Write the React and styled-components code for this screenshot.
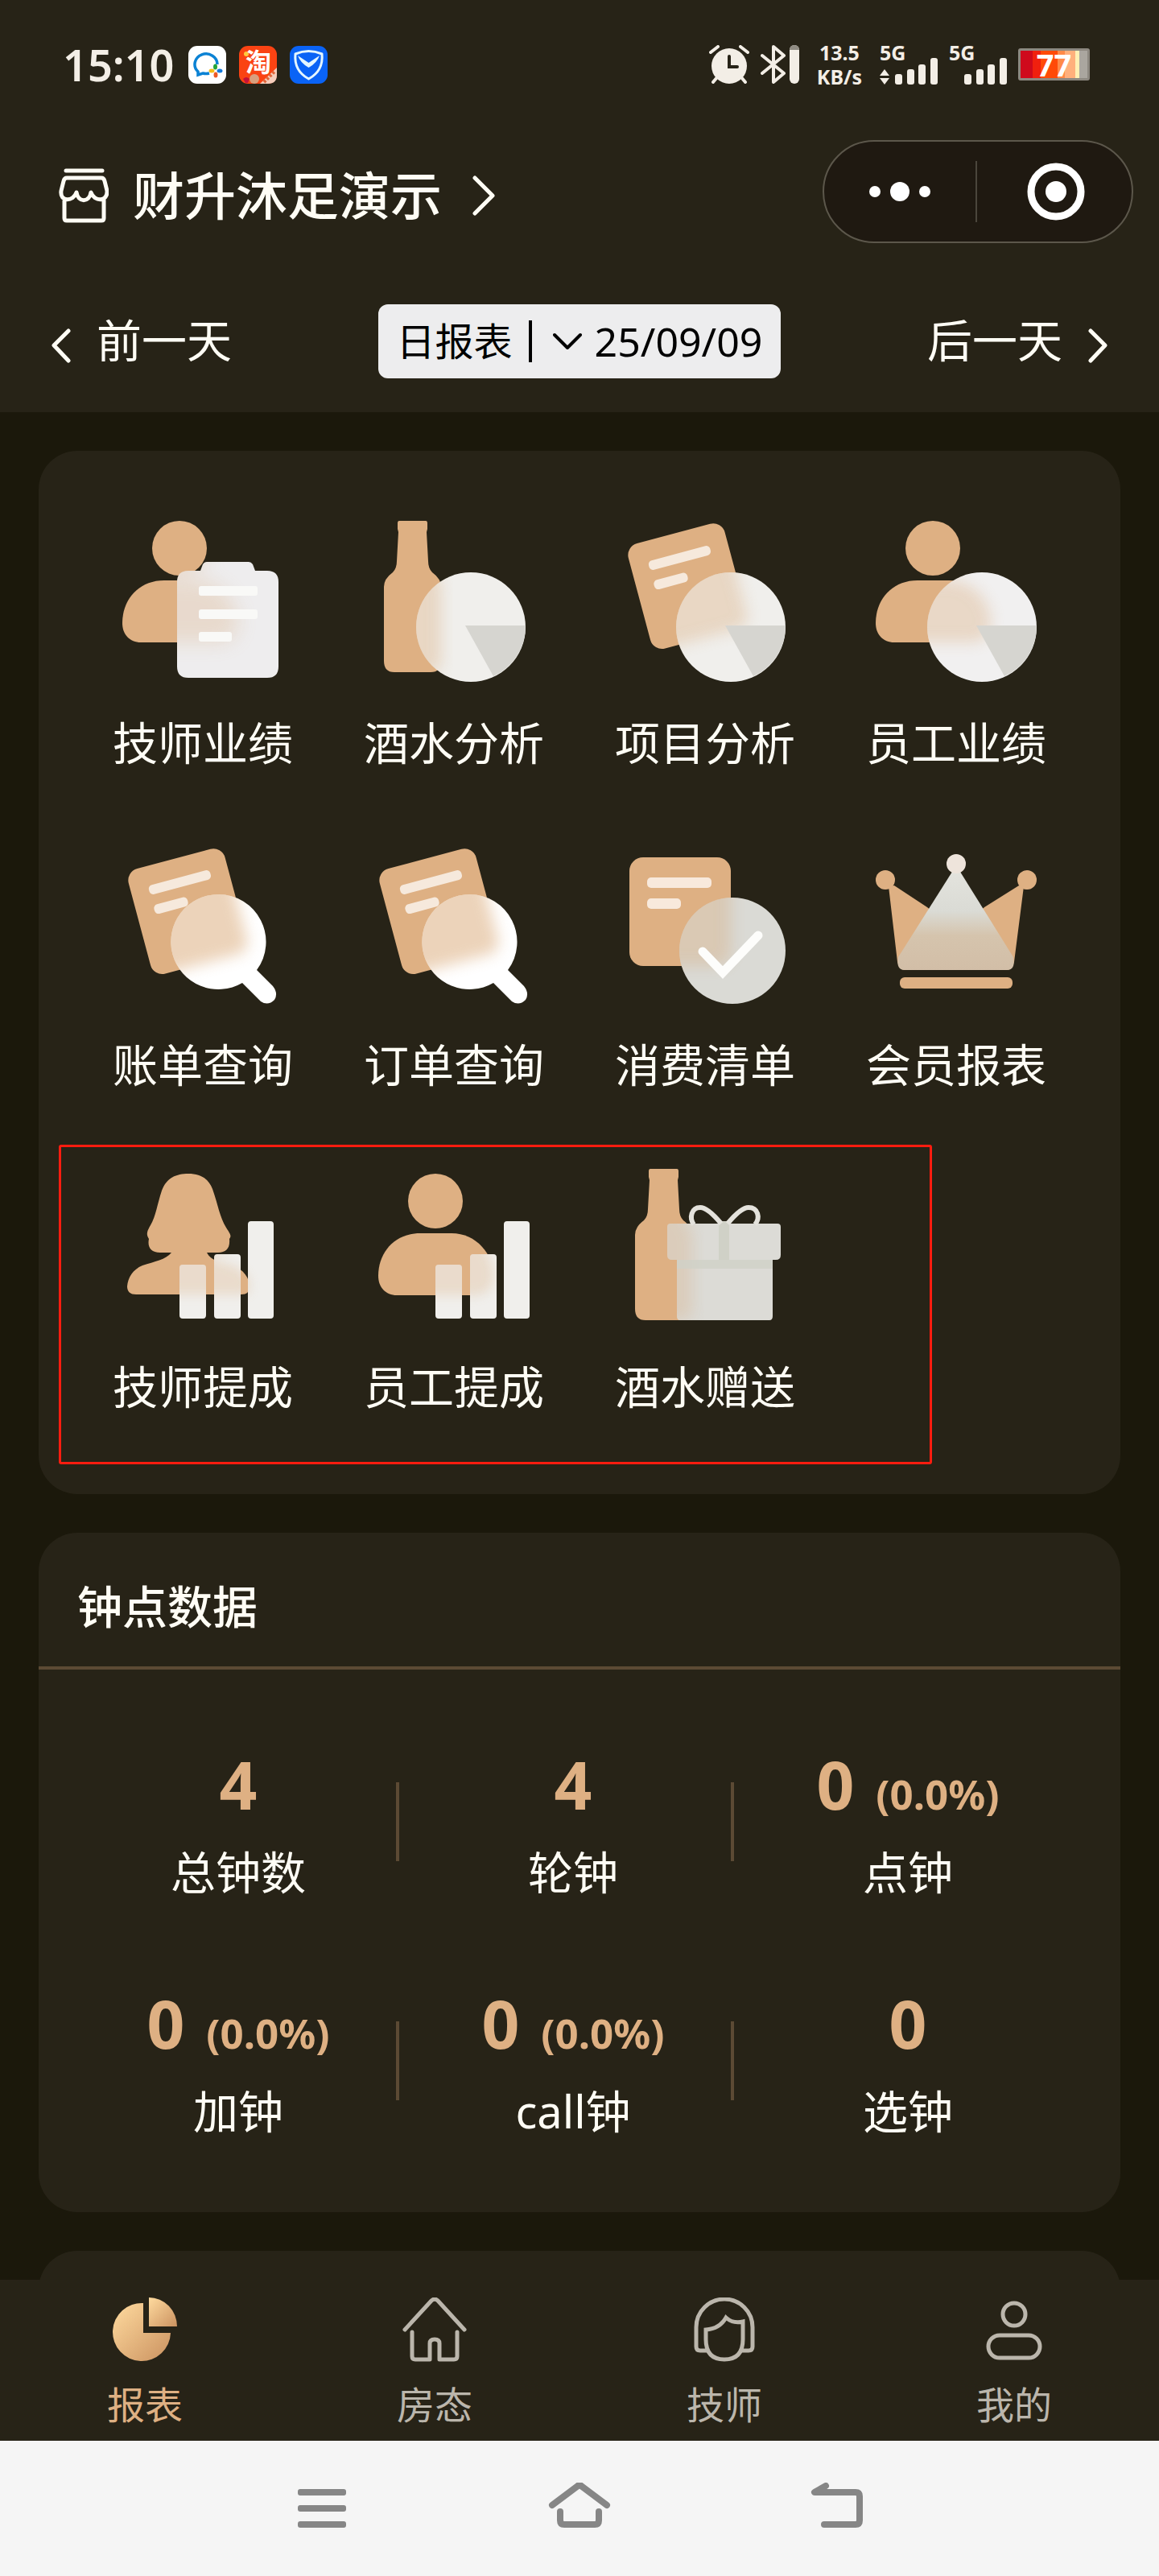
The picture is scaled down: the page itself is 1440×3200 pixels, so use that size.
import React, { useId } from "react";
import styled, { createGlobalStyle } from "styled-components";

const color = {
  page: "#1b180b",
  panel: "#272317",
  tan: "#deb083",
  line: "#5c4a34",
  text: "#fffdf5",
  muted: "#bbb6ac",
};

const GlobalStyle = createGlobalStyle`
  * { box-sizing: border-box; }
  body {
    margin: 0;
    background: ${color.page};
    color: ${color.text};
    font-family: "Noto Sans", "Noto Sans CJK SC", sans-serif;
  }
  button {
    margin: 0;
    padding: 0;
    border: 0;
    background: none;
    color: inherit;
    font: inherit;
    cursor: pointer;
  }
  a { color: inherit; text-decoration: none; }
  svg { display: block; flex: none; }
`;

/* ---------- layout ---------- */

const Screen = styled.div`
  display: flex;
  flex-direction: column;
  height: 100vh;
`;

const Header = styled.header`
  flex: none;
  padding-bottom: 42px;
  background: ${color.panel};
`;

const StatusBar = styled.div`
  display: flex;
  align-items: center;
  justify-content: space-between;
  height: 160px;
  padding: 0 86px 0 78px;
  color: #f3eee6;
`;

const StatusGroup = styled.div`
  display: flex;
  align-items: center;
  gap: ${(p) => p.$gap}px;
`;

const Time = styled.span`
  margin-right: 2px;
  font-size: 54px;
  font-weight: 600;
  line-height: 64px;
`;

const Speed = styled.div`
  display: flex;
  flex-direction: column;
  align-items: center;
  padding: 0 8px;
  font-size: 25px;
  font-weight: 700;
  line-height: 30px;
`;

const Signal = styled.div`
  display: grid;
  width: 72px;
  height: 50px;
  font-size: 25px;
  font-weight: 700;
  line-height: 20px;
  > * { grid-area: 1 / 1; }
`;

const Battery = styled.div`
  display: flex;
  align-items: center;
  justify-content: center;
  width: 89px;
  height: 40px;
  border: 3px solid #8d8880;
  border-radius: 3px;
  background: linear-gradient(
    90deg,
    #cf0a1c 0 18%,
    #f0200e 18% 30%,
    #ff4a08 30% 55%,
    #ff8a48 55% 66%,
    #ffb07c 66% 82%,
    #fff0b4 82% 88%,
    #aaa69f 88%
  );
  color: #fff;
  font-size: 38px;
  font-weight: 700;
  line-height: 36px;
`;

const TitleRow = styled.div`
  display: flex;
  align-items: center;
  justify-content: space-between;
  height: 128px;
  margin-top: 14px;
  padding: 0 32px 0 73px;
`;

const ShopButton = styled.button`
  display: flex;
  align-items: center;
  padding-top: 10px;
`;

const ShopName = styled.span`
  margin: 0 38px 0 30px;
  font-size: 64px;
  font-weight: 500;
  line-height: 80px;
`;

const Capsule = styled.div`
  display: flex;
  align-items: center;
  width: 386px;
  height: 128px;
  border: 2px solid #5c574b;
  border-radius: 64px;
  background: #1f1911;
`;

const CapsuleButton = styled.button`
  display: flex;
  flex: 1;
  align-items: center;
  justify-content: center;
  height: 76px;
  & + & {
    padding-left: 4px;
    border-left: 2px solid #4b463c;
  }
`;

const DateRow = styled.div`
  display: flex;
  align-items: center;
  justify-content: space-between;
  margin-top: 76px;
  padding: 0 64px;
`;

const DayButton = styled.button`
  display: flex;
  align-items: center;
  gap: 32px;
  padding-bottom: 4px;
  font-size: 56px;
  line-height: 80px;
`;

const DatePicker = styled.button`
  display: flex;
  align-items: center;
  justify-content: center;
  gap: 16px;
  min-width: 500px;
  height: 92px;
  border-radius: 12px;
  background: #ededee;
  color: #000;
  font-size: 48px;
  line-height: 64px;
`;

const PickerRule = styled.span`
  width: 4px;
  height: 52px;
  margin: 0 10px 0 4px;
  background: #000;
`;

const PickerDate = styled.span`
  font-size: 50px;
`;

const Main = styled.main`
  display: flex;
  flex: 1;
  flex-direction: column;
  gap: 48px;
  min-height: 0;
  padding: 48px 48px 0;
  overflow-y: auto;
  scrollbar-width: none;
`;

const Card = styled.section`
  position: relative;
  flex: none;
  min-height: 240px;
  border-radius: 48px;
  background: ${color.panel};
`;

const MenuGrid = styled.nav`
  display: grid;
  grid-template-columns: repeat(4, 1fr);
  padding: 48px;
`;

const MenuItem = styled.a`
  display: flex;
  flex-direction: column;
  align-items: center;
  gap: 36px;
  padding: 39px 0 47px;
  font-size: 56px;
  line-height: 78px;
  white-space: nowrap;
`;

const MenuIcon = styled.svg`
  width: 200px;
  height: 200px;
`;

const Highlight = styled.div`
  position: absolute;
  top: 862px;
  right: 234px;
  bottom: 37px;
  left: 25px;
  border: 3px solid #ff1c0f;
  border-radius: 3px;
  pointer-events: none;
`;

const CardTitle = styled.h2`
  margin: 0;
  padding: 52px 48px 36px;
  border-bottom: 4px solid ${color.line};
  font-size: 56px;
  font-weight: 500;
  line-height: 78px;
`;

const StatGrid = styled.div`
  display: grid;
  grid-template-columns: repeat(3, 1fr);
  column-gap: 16px;
  padding: 40px 64px 40px 48px;
`;

const Stat = styled.div`
  display: flex;
  flex-direction: column;
  align-items: center;
  gap: 14px;
  padding: 46px 0 47px;
  background: linear-gradient(${color.line}, ${color.line}) no-repeat right center / 4px 98px;
  &:nth-child(3n) { background: none; }
`;

const StatValue = styled.div`
  display: flex;
  align-items: baseline;
  gap: 27px;
  height: 112px;
  color: ${color.tan};
  font-size: 82px;
  font-weight: 700;
  line-height: 112px;
`;

const StatShare = styled.span`
  font-size: 51px;
  line-height: 64px;
`;

const StatLabel = styled.div`
  font-size: 56px;
  line-height: 78px;
`;

const TabBar = styled.nav`
  display: grid;
  flex: none;
  grid-template-columns: repeat(4, 1fr);
  background: ${color.panel};
`;

const Tab = styled.a`
  display: flex;
  flex-direction: column;
  align-items: center;
  gap: 20px;
  padding: 22px 0 12px;
  color: ${(p) => (p.$active ? color.tan : color.muted)};
  font-size: 47px;
  line-height: 66px;
`;

const SystemNav = styled.nav`
  display: flex;
  flex: none;
  align-items: center;
  justify-content: center;
  gap: 240px;
  height: 168px;
  background: #f5f5f5;
  color: #868686;
`;

/* ---------- menu drawings ---------- */

const Person = () => (
  <g>
    <circle cx="71" cy="34" r="34" />
    <path d="M52 74H91C122 74 143 100 143 127C143 142 134 151 120 151H23C9 151 0 141 0 127C0 98 20 74 52 74Z" />
  </g>
);

const Bottle = () => (
  <path d="M32 0H65Q67 0 67 3V10L66 14L68 50Q68 59 73 64Q84 72 84 82V174Q84 188 71 188H26Q13 188 13 174V82Q13 72 24 64Q29 59 29 50L31 14L30 10V3Q30 0 32 0Z" />
);

const Sheet = () => <rect width="124" height="135" rx="15" transform="translate(1 32) rotate(-15)" />;

const SheetLines = () => (
  <g transform="translate(1 32) rotate(-15)" fill="#f6e9dc">
    <rect x="22" y="25" width="79" height="12" rx="5" />
    <rect x="22" y="50" width="43" height="12" rx="5" />
  </g>
);

const Woman = () => (
  <path d="M82 11C97 11 107 17 112 30C119 50 121 65 129 78C134 86 136 88 133 92C134 104 129 109 119 109H105C110 119 122 121 137 125C151 130 158 141 158 151Q158 161 148 161H17Q6 161 6 151C7 140 13 130 25 125C40 120 54 118 61 109H47C35 109 31 102 33 92C29 86 31 82 35 75C42 63 43 50 49 32C55 16 67 11 82 11Z" />
);

/* A light pane laid over a tan shape; the part behind shows through softly. */
function Frosted({ back, pane, fill = "#f0efec", strength = 0.32, blur = 9, extra, details }) {
  const id = useId().replace(/[^a-zA-Z0-9]/g, "");
  return (
    <MenuIcon viewBox="0 0 200 200" aria-hidden="true">
      <defs>
        <clipPath id={`c${id}`}>{pane}</clipPath>
        <filter id={`b${id}`} x="-20%" y="-20%" width="140%" height="140%">
          <feGaussianBlur stdDeviation={blur} />
        </filter>
      </defs>
      <g fill={color.tan}>{back}</g>
      {details}
      <g fill={fill}>{pane}</g>
      <g clipPath={`url(#c${id})`}>
        <g fill="#d8a470" opacity={strength} filter={`url(#b${id})`}>{back}</g>
      </g>
      {extra}
    </MenuIcon>
  );
}

const Wedge = ({ cx }) => (
  <path d={`M${cx - 7} 130H${cx + 68}A68 68 0 0 1 ${cx + 28} 193Z`} fill="#d6d5d0" />
);

const TechPerformance = () => (
  <Frosted
    back={<Person />}
    pane={<path d="M82 62H97L100 54Q102 51 105 51H157Q160 51 162 54L165 62H180Q194 62 194 76V181Q194 195 180 195H82Q68 195 68 181V76Q68 62 82 62Z" />}
    fill="#eeedee"
    strength={0.26}
    blur={12}
    extra={
      <g fill="#f9f9f7">
        <rect x="95" y="81" width="73" height="12" rx="3" />
        <rect x="95" y="110" width="73" height="12" rx="3" />
        <rect x="95" y="138" width="41" height="12" rx="3" />
      </g>
    }
  />
);

const DrinkAnalysis = () => (
  <Frosted back={<Bottle />} pane={<circle cx="121" cy="132" r="68" />} extra={<Wedge cx={121} />} />
);

const ItemAnalysis = () => (
  <Frosted back={<Sheet />} details={<SheetLines />} pane={<circle cx="132" cy="132" r="68" />} extra={<Wedge cx={132} />} />
);

const StaffPerformance = () => (
  <Frosted back={<Person />} pane={<circle cx="132" cy="132" r="68" />} fill="#f1f0f0" extra={<Wedge cx={132} />} />
);

const BillSearch = () => (
  <Frosted
    back={<g transform="translate(3 4)"><Sheet /></g>}
    details={<g transform="translate(3 3)"><SheetLines /></g>}
    pane={<path d="M119.500 64A59 59 0 0 1 167 158L187 178Q194 187 189 195Q181 203 172 197L149 174A59 59 0 1 1 119.500 64Z" />}
    fill="#fff"
    strength={0.48}
  />
);

const SpendList = () => (
  <Frosted
    back={<rect x="6" y="18" width="126" height="135" rx="17" />}
    details={
      <g fill="#f8e9dc">
        <rect x="28" y="43" width="80" height="13" rx="5" />
        <rect x="28" y="69" width="42" height="13" rx="5" />
      </g>
    }
    pane={<circle cx="134" cy="134" r="66" />}
    fill="#dadad5"
    strength={0.32}
    extra={<path d="M97 135L122 161L166 115" fill="none" stroke="#fdfdfb" strokeWidth="11" strokeLinecap="round" />}
  />
);

const Crown = () => {
  const id = useId().replace(/[^a-zA-Z0-9]/g, "");
  return (
    <MenuIcon viewBox="0 0 200 200" aria-hidden="true">
      <defs>
        <linearGradient id={id} x1="0" y1="0" x2="0" y2="1">
          <stop offset="0" stopColor="#e3e3dd" />
          <stop offset=".4" stopColor="#dadbd5" />
          <stop offset=".65" stopColor="#d5c4ad" />
          <stop offset="1" stopColor="#d2bea7" />
        </linearGradient>
      </defs>
      <g fill={color.tan}>
        <circle cx="12" cy="46" r="12" />
        <circle cx="188" cy="46" r="12" />
        <path d="M16 54L23 53L64 80L100 110L135 80L178 53L184 54L172 148Q170 158 162 158H37Q29 158 27 148Z" />
        <rect x="30" y="167" width="140" height="14" rx="6" />
      </g>
      <path d="M95 36H105L171 142Q174 158 163 158H36Q25 158 28 142Z" fill={`url(#${id})`} />
      <circle cx="100" cy="26" r="12" fill="#eee4db" />
    </MenuIcon>
  );
};

const barsShape = (x) => (
  <path
    d={`M${x + 4} 124h25q4 0 4 4v59q0 4-4 4h-25q-4 0-4-4v-59q0-4 4-4ZM${x + 47} 111h25q4 0 4 4v72q0 4-4 4h-25q-4 0-4-4v-72q0-4 4-4ZM${x + 89} 70h24q4 0 4 4v113q0 4-4 4h-24q-4 0-4-4v-113q0-4 4-4Z`}
  />
);

const TechCommission = () => (
  <Frosted back={<Woman />} pane={barsShape(71)} strength={0.26} blur={7} />
);

const StaffCommission = () => (
  <Frosted back={<g transform="translate(6 11)"><Person /></g>} pane={barsShape(77)} strength={0.26} blur={7} />
);

const DrinkGift = () => (
  <Frosted
    back={<g transform="translate(0 5)"><Bottle /></g>}
    pane={<path d="M57 73H190Q194 73 194 77V112Q194 118 188 118H184V188Q184 193 180 193H69Q65 193 65 188V118H59Q53 118 53 112V77Q53 73 57 73Z" />}
    fill="#dcdbd6"
    strength={0.26}
    extra={
      <g>
        <rect x="117" y="70" width="13" height="48" fill="#d0d1c7" />
        <rect x="65" y="118" width="119" height="11" fill="#d0d1c7" opacity=".8" />
        <g fill="none" stroke="#e4e2dc" strokeWidth="6">
          <path d="M120 73C110 61 101 53 94 53C83 53 80 66 86 74" />
          <path d="M128 73C138 61 147 53 154 53C166 53 169 66 162 74" />
        </g>
      </g>
    }
  />
);

/* ---------- small icons ---------- */

const Stroke = ({ w, h, width = 5, children, ...rest }) => (
  <svg
    width={w}
    height={h}
    viewBox={`0 0 ${w} ${h}`}
    fill="none"
    stroke="currentColor"
    strokeWidth={width}
    strokeLinecap="round"
    strokeLinejoin="round"
    aria-hidden="true"
    {...rest}
  >
    {children}
  </svg>
);

const ShopIcon = () => (
  <Stroke w={62} h={68}>
    <path d="M9 3H54M10 12H53Q56 12 57 16L60 28C61 42 44 42 40 30C38 43 24 43 22 30C18 42 1 42 3 28L6 16Q7 12 10 12ZM7 40V62Q7 65 10 65H53Q56 65 56 62V40" />
  </Stroke>
);

const WorkChatIcon = () => (
  <svg width="47" height="47" viewBox="0 0 47 47" aria-hidden="true">
    <rect width="47" height="47" rx="11" fill="#fff" />
    <path d="M36 23A14 13 0 1 0 12 32L12 36L18 34Q22 35 26 34" fill="none" stroke="#0b82d4" strokeWidth="3.500" />
    <ellipse cx="33.500" cy="26" rx="2.500" ry="3.500" fill="#24a53a" />
    <ellipse cx="39" cy="31" rx="3.500" ry="2.500" fill="#1279dc" />
    <ellipse cx="29" cy="31" rx="3.500" ry="2.500" fill="#f5bd17" />
    <ellipse cx="34" cy="36" rx="2.500" ry="3.500" fill="#ee5a24" />
  </svg>
);

const ShoppingIcon = () => (
  <svg width="47" height="47" viewBox="0 0 47 47" overflow="visible" role="img" aria-label="淘宝">
    <rect width="47" height="47" rx="11" fill="#fa4313" />
    <path d="M47 27V36Q47 47 36 47H26Z" fill="#f6cdbb" />
    <path d="M31 45L45 31" stroke="#e0653a" strokeWidth="4" strokeDasharray="3 2" />
    <path d="M5 41Q9 37 13 41L11 46H8Z" fill="#c4123a" />
    <circle cx="19" cy="41" r="6" fill="#d8a07e" />
    <circle cx="9" cy="10" r="3" fill="#ffc83d" />
    <text x="24" y="32" textAnchor="middle" fill="#fff" fontSize="32" fontWeight="700" fontFamily="Noto Sans CJK SC, sans-serif">淘</text>
  </svg>
);

const ShieldIcon = () => (
  <svg width="47" height="47" viewBox="0 0 47 47" aria-hidden="true">
    <rect width="47" height="47" rx="11" fill="#0a63f6" />
    <path d="M7 10Q23.500 3 40 10Q42 31 23.500 41Q5 31 7 10Z" fill="none" stroke="#e4f6ff" strokeWidth="3" strokeLinejoin="round" />
    <path d="M10 12L23.500 21L37 12Q34 21 23.500 27Q13 21 10 12Z" fill="#e4f6ff" />
  </svg>
);

const AlarmIcon = () => (
  <svg width="50" height="48" viewBox="0 0 50 48" aria-hidden="true">
    <circle cx="25" cy="26" r="22" fill="currentColor" />
    <path d="M2 9L11 2M48 9L39 2M5 46L10 40M45 46L40 40" stroke="currentColor" strokeWidth="4" strokeLinecap="round" />
    <path d="M25 14V27H35" fill="none" stroke={color.panel} strokeWidth="4" strokeLinecap="round" />
  </svg>
);

const BluetoothIcon = () => (
  <svg width="48" height="48" viewBox="0 0 48 48" aria-hidden="true">
    <path d="M2 13L29 35L16 46V2L29 13L2 35" fill="none" stroke="currentColor" strokeWidth="4" strokeLinecap="round" strokeLinejoin="round" />
    <rect x="36" width="12" height="48" rx="6" fill="currentColor" />
    <path d="M36 6Q36 0 42 0Q48 0 48 6Z" fill="#8f8b82" />
  </svg>
);

const SignalBars = ({ arrows }) => (
  <svg width="72" height="50" viewBox="0 0 72 50" fill="currentColor" aria-hidden="true">
    {arrows && <path d="M6 31L12 39H0ZM0 42H12L6 50Z" />}
    <rect x="19" y="37" width="9" height="13" rx="3" />
    <rect x="34" y="31" width="9" height="19" rx="3" />
    <rect x="48" y="25" width="9" height="25" rx="3" />
    <rect x="63" y="17" width="9" height="33" rx="3" />
  </svg>
);

const TabIcons = {
  report: (
    <svg width="80" height="80" viewBox="0 0 80 80" aria-hidden="true">
      <defs>
        <linearGradient id="gold" x1="0" y1="0" x2="1" y2="1">
          <stop offset="0" stopColor="#ffdb9f" />
          <stop offset="1" stopColor="#cb9260" />
        </linearGradient>
      </defs>
      <path d="M38 7V44H72A36 36 0 1 1 38 7Z" fill="url(#gold)" />
      <path d="M45 0A35 36 0 0 1 80 36H45Z" fill="url(#gold)" />
    </svg>
  ),
  rooms: (
    <Stroke w={80} h={80}>
      <path d="M3 40L36 4Q40 0 44 4L77 40M12 43V73Q12 77 16 77H34V57Q34 52 40 52Q46 52 46 57V77H64Q68 77 68 73V43" />
    </Stroke>
  ),
  tech: (
    <Stroke w={80} h={80}>
      <path d="M19 66H10Q5 66 5 61V37A35 35 0 0 1 75 37V61Q75 66 70 66H61" />
      <path d="M17 40Q34 39 42 25Q51 33 63 30V52Q63 77 40 77Q17 77 17 52Z" strokeLinejoin="miter" />
    </Stroke>
  ),
  mine: (
    <Stroke w={80} h={80}>
      <circle cx="40" cy="21" r="14" />
      <rect x="8" y="47" width="64" height="28" rx="14" />
    </Stroke>
  ),
};

/* ---------- data ---------- */

const menu = [
  ["技师业绩", TechPerformance],
  ["酒水分析", DrinkAnalysis],
  ["项目分析", ItemAnalysis],
  ["员工业绩", StaffPerformance],
  ["账单查询", BillSearch],
  ["订单查询", BillSearch],
  ["消费清单", SpendList],
  ["会员报表", Crown],
  ["技师提成", TechCommission],
  ["员工提成", StaffCommission],
  ["酒水赠送", DrinkGift],
];

const stats = [
  { label: "总钟数", value: 4 },
  { label: "轮钟", value: 4 },
  { label: "点钟", value: 0, share: "(0.0%)" },
  { label: "加钟", value: 0, share: "(0.0%)" },
  { label: "call钟", value: 0, share: "(0.0%)" },
  { label: "选钟", value: 0 },
];

const tabs = [
  ["报表", "report"],
  ["房态", "rooms"],
  ["技师", "tech"],
  ["我的", "mine"],
];

export default function App() {
  return (
    <Screen>
      <GlobalStyle />
      <Header>
        <StatusBar>
          <StatusGroup $gap={16}>
            <Time>15:10</Time>
            <WorkChatIcon />
            <ShoppingIcon />
            <ShieldIcon />
          </StatusGroup>
          <StatusGroup $gap={14}>
            <AlarmIcon />
            <BluetoothIcon />
            <Speed>
              <span>13.5</span>
              <span>KB/s</span>
            </Speed>
            <Signal>
              <span>5G</span>
              <SignalBars arrows />
            </Signal>
            <Signal>
              <span>5G</span>
              <SignalBars />
            </Signal>
            <Battery>77</Battery>
          </StatusGroup>
        </StatusBar>

        <TitleRow>
          <ShopButton type="button">
            <ShopIcon />
            <ShopName>财升沐足演示</ShopName>
            <Stroke w={28} h={50}>
              <path d="M3 3L25 25L3 47" />
            </Stroke>
          </ShopButton>
          <Capsule>
            <CapsuleButton type="button" aria-label="更多">
              <svg width="76" height="24" viewBox="0 0 76 24" fill="#fff" aria-hidden="true">
                <circle cx="7" cy="12" r="7" />
                <circle cx="38" cy="12" r="12" />
                <circle cx="69" cy="12" r="7" />
              </svg>
            </CapsuleButton>
            <CapsuleButton type="button" aria-label="关闭">
              <svg width="72" height="72" viewBox="0 0 72 72" aria-hidden="true">
                <circle cx="36" cy="36" r="31" fill="none" stroke="#fff" strokeWidth="9" />
                <circle cx="36" cy="36" r="13" fill="#fff" />
              </svg>
            </CapsuleButton>
          </Capsule>
        </TitleRow>

        <DateRow>
          <DayButton type="button">
            <Stroke w={24} h={58}>
              <path d="M21 18L3 36L21 55" />
            </Stroke>
            前一天
          </DayButton>
          <DatePicker type="button">
            <span>日报表</span>
            <PickerRule />
            <Stroke w={36} h={22} width={4}>
              <path d="M2 3L18 19L34 3" />
            </Stroke>
            <PickerDate>25/09/09</PickerDate>
          </DatePicker>
          <DayButton type="button">
            后一天
            <Stroke w={24} h={58}>
              <path d="M3 18L21 36L3 55" />
            </Stroke>
          </DayButton>
        </DateRow>
      </Header>

      <Main>
        <Card>
          <MenuGrid>
            {menu.map(([label, Icon]) => (
              <MenuItem key={label} href="#">
                <Icon />
                {label}
              </MenuItem>
            ))}
          </MenuGrid>
          <Highlight />
        </Card>

        <Card>
          <CardTitle>钟点数据</CardTitle>
          <StatGrid>
            {stats.map((s) => (
              <Stat key={s.label}>
                <StatValue>
                  {s.value}
                  {s.share && <StatShare>{s.share}</StatShare>}
                </StatValue>
                <StatLabel>{s.label}</StatLabel>
              </Stat>
            ))}
          </StatGrid>
        </Card>

        <Card />
      </Main>

      <TabBar>
        {tabs.map(([label, icon], i) => (
          <Tab key={icon} href="#" $active={i === 0}>
            {TabIcons[icon]}
            {label}
          </Tab>
        ))}
      </TabBar>

      <SystemNav>
        <button type="button" aria-label="菜单">
          <svg width="80" height="64" viewBox="0 0 80 64" fill="currentColor" aria-hidden="true">
            <rect x="10" y="8" width="60" height="8" rx="3" />
            <rect x="10" y="28" width="60" height="8" rx="3" />
            <rect x="10" y="48" width="60" height="8" rx="3" />
          </svg>
        </button>
        <button type="button" aria-label="主页">
          <Stroke w={80} h={64} width={8}>
            <path d="M6 28L38 4Q40 2 42 4L74 28M16 36V47Q16 52 21 52H59Q64 52 64 47V36" />
          </Stroke>
        </button>
        <button type="button" aria-label="返回">
          <Stroke w={80} h={64} width={8}>
            <path d="M26 4L12 12H63Q68 12 68 17V47Q68 52 63 52H24" />
          </Stroke>
        </button>
      </SystemNav>
    </Screen>
  );
}
